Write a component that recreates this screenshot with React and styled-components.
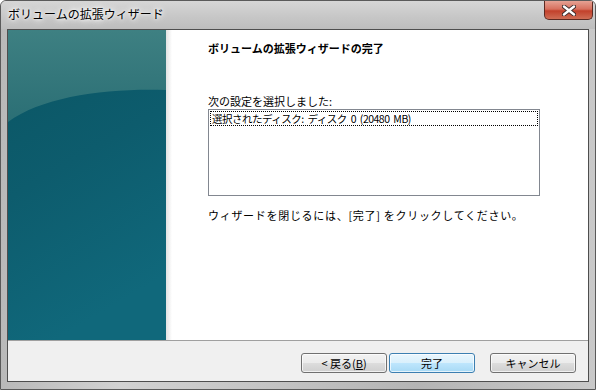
import styled, { createGlobalStyle } from "styled-components";

const GlobalStyle = createGlobalStyle`
  html, body {
    margin: 0;
    padding: 0;
    background: #ffffff;
  }
  body {
    font-family: "Noto Sans CJK JP", "Noto Sans", sans-serif;
  }
`;

const Window = styled.div`
  width: 596px;
  height: 390px;
  box-sizing: border-box;
  display: flex;
  flex-direction: column;
  border: 1px solid #5a5a5a;
  border-radius: 6px 6px 0 0;
  background: linear-gradient(90deg, #b9b9b9 0%, #d2d2d2 20%, #c4c4c4 45%, #b4b4b4 70%, #c9c9c9 100%);
  overflow: hidden;
`;

const TitleBar = styled.div`
  height: 28px;
  display: flex;
  align-items: flex-start;
  justify-content: space-between;
  background: linear-gradient(180deg, #d6d6d6 0%, #c6c6c6 60%, #bdbdbd 100%);
`;

const Title = styled.span`
  margin: 6px 0 0 7px;
  font-size: 12px;
  line-height: 14px;
  color: #000;
  text-shadow: 0 0 6px #ffffff, 0 0 3px #ffffff, 0 0 8px #ffffff;
`;

const CloseButton = styled.div`
  width: 49px;
  height: 19px;
  margin-right: 2px;
  box-sizing: border-box;
  border: 1px solid #5c2a22;
  border-top: none;
  border-radius: 0 0 5px 5px;
  background: linear-gradient(180deg, #e6a294 0%, #d7705e 45%, #c2412b 55%, #cf6d55 100%);
  display: flex;
  align-items: center;
  justify-content: center;
`;

const Client = styled.div`
  flex: 1;
  margin: 0 6px 7px 6px;
  display: flex;
  flex-direction: column;
  border: 1px solid #4e4e4e;
  background: #f0f0f0;
`;

const Content = styled.div`
  height: 310px;
  display: flex;
  background: #ffffff;
`;

const SidePanel = styled.div`
  width: 158px;
  height: 100%;
  flex-shrink: 0;
`;

const Shade = styled.div`
  width: 6px;
  background: linear-gradient(90deg, #e2e2e2, #ffffff);
`;

const Main = styled.div`
  flex: 1;
  padding: 11px 0 0 36px;
  display: flex;
  flex-direction: column;
`;

const Heading = styled.div`
  font-size: 11px;
  font-weight: bold;
  line-height: 14px;
  color: #000;
`;

const Label = styled.div`
  margin-top: ${(p) => p.$top}px;
  font-size: 11px;
  line-height: 14px;
  letter-spacing: ${(p) => p.$spacing || 0}px;
  color: #000;
`;

const ListBox = styled.div`
  width: 332px;
  height: 87px;
  margin-top: 1px;
  box-sizing: border-box;
  border: 1px solid #828790;
  padding: 1px;
`;

const ListItem = styled.div`
  height: 13px;
  border: 1px dotted #000;
  font-size: 10.5px;
  line-height: 13px;
  letter-spacing: -0.5px;
  word-spacing: 2px;
  padding-left: 1px;
  color: #000;
  white-space: pre;
`;

const Footer = styled.div`
  flex: 1;
  border-top: 1px solid #a0a0a0;
  display: flex;
  align-items: flex-start;
  padding: 12px 12px 0 0;
  justify-content: flex-end;
  gap: 2px;
`;

const Button = styled.div`
  width: 86px;
  height: 20px;
  box-sizing: border-box;
  margin-left: ${(p) => p.$gap || 0}px;
  border: 1px solid ${(p) => (p.$primary ? "#3c7fb1" : "#707070")};
  border-radius: 3px;
  background: ${(p) =>
    p.$primary
      ? "linear-gradient(180deg, #eaf6fd 0%, #d9f0fc 50%, #bee6fd 51%, #a7d9f5 100%)"
      : "linear-gradient(180deg, #f2f2f2 0%, #ebebeb 50%, #dddddd 51%, #cfcfcf 100%)"};
  box-shadow: inset 0 0 0 1px rgba(255, 255, 255, 0.7);
  display: flex;
  align-items: center;
  justify-content: center;
  font-size: 11px;
  color: #000;
`;

const Key = styled.span`
  text-decoration: underline;
`;

function Teal() {
  return (
    <svg width="158" height="310" viewBox="0 0 158 310">
      <defs>
        <linearGradient id="base" x1="0" y1="0" x2="0.3" y2="1">
          <stop offset="0" stopColor="#0a5563" />
          <stop offset="0.5" stopColor="#0d5c6d" />
          <stop offset="1" stopColor="#10687b" />
        </linearGradient>
        <linearGradient id="gloss" x1="0" y1="0" x2="0" y2="1">
          <stop offset="0" stopColor="#3e8082" />
          <stop offset="1" stopColor="#2b6f75" />
        </linearGradient>
      </defs>
      <rect width="158" height="310" fill="url(#base)" />
      <path d="M0 0 H158 V60 C100 58 35 66 0 92 Z" fill="url(#gloss)" />
    </svg>
  );
}

export default function App() {
  return (
    <>
      <GlobalStyle />
      <Window>
        <TitleBar>
          <Title>ボリュームの拡張ウィザード</Title>
          <CloseButton>
            <svg width="14" height="11" viewBox="0 0 14 11">
              <path
                d="M2 1.5 L12 9.5 M12 1.5 L2 9.5"
                stroke="#3a2a2a"
                strokeWidth="4.2"
                strokeLinecap="round"
              />
              <path
                d="M2 1.5 L12 9.5 M12 1.5 L2 9.5"
                stroke="#ffffff"
                strokeWidth="2.4"
                strokeLinecap="round"
              />
            </svg>
          </CloseButton>
        </TitleBar>
        <Client>
          <Content>
            <SidePanel>
              <Teal />
            </SidePanel>
            <Shade />
            <Main>
              <Heading>ボリュームの拡張ウィザードの完了</Heading>
              <Label $top={39}>次の設定を選択しました:</Label>
              <ListBox>
                <ListItem>選択されたディスク: ディスク 0 (20480 MB)</ListItem>
              </ListBox>
              <Label $top={12} $spacing={0.7}>
                ウィザードを閉じるには、[完了] をクリックしてください。
              </Label>
            </Main>
          </Content>
          <Footer>
            <Button>
              &lt; 戻る(<Key>B</Key>)
            </Button>
            <Button $primary>完了</Button>
            <Button $gap={13}>キャンセル</Button>
          </Footer>
        </Client>
      </Window>
    </>
  );
}
